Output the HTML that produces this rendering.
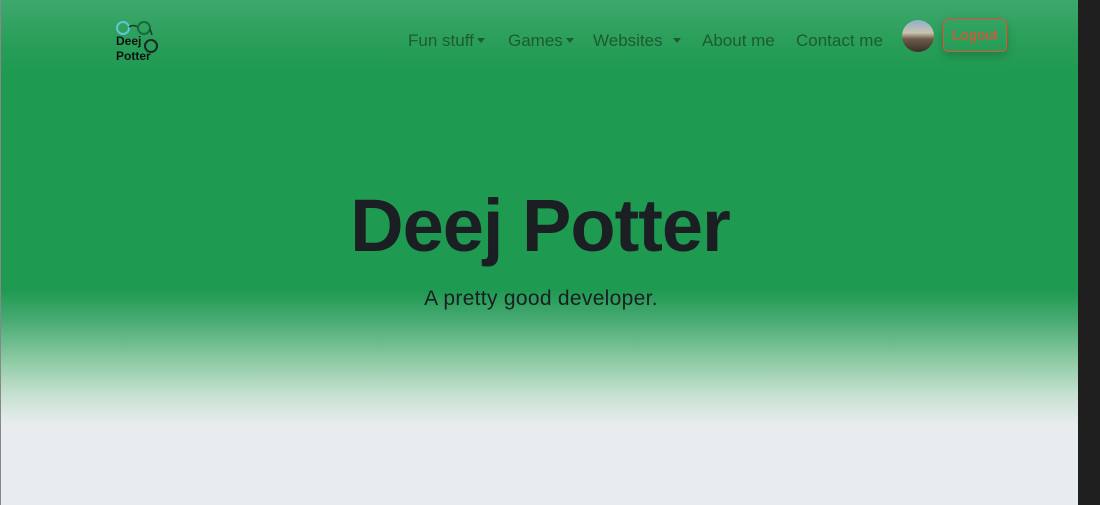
<!DOCTYPE html>
<html><head><style>
body{margin:0;width:1100px;height:505px;overflow:hidden;background:#1f1f1f;font-family:"Liberation Sans",sans-serif}
.page{position:absolute;left:0;top:0;width:1078px;height:505px;border-left:1px solid #888;box-sizing:border-box;
background:linear-gradient(to bottom,#3ea86c 0px,#2a9f5a 40px,#1e9a51 75px,#1e9a51 290px,#48aa72 320px,#8ccaa3 360px,#c6e1d0 395px,#e8ecef 425px,#e8ecef 505px)}
.nav{position:absolute;top:31px;font-size:17px;color:#1e5a33}
.nav span{position:absolute;white-space:nowrap}
.car{display:inline-block;border-left:4px solid transparent;border-right:4px solid transparent;border-top:5px solid #1e5a33;vertical-align:3px;margin-left:3px}
h1{position:absolute;top:183px;left:0;width:1078px;text-align:center;margin:0;font-size:74px;font-weight:bold;color:#1b1e22;letter-spacing:-1px}
.sub{position:absolute;top:287px;left:0;width:1080px;text-align:center;font-size:21px;color:#1b1e22;letter-spacing:0.3px}
.btn{position:absolute;left:942px;top:19px;width:64px;height:33px;border:1px solid #e8503a;border-radius:5px;color:#f04a32;font-size:15px;text-align:center;line-height:32px;box-shadow:0 4px 10px rgba(0,0,0,.2);box-sizing:border-box;z-index:2}
.av{position:absolute;left:901px;top:20px;width:32px;height:32px;border-radius:50%;background:linear-gradient(to bottom,#8fb0c8 0,#c9c3b0 40%,#6b5a48 60%,#3a3028 100%)}
</style></head><body><div class="page">
<svg style="position:absolute;left:113px;top:19px" width="46" height="44">
<circle cx="9" cy="9" r="6" fill="none" stroke="#5fc6d8" stroke-width="2"/>
<path d="M15 8 Q19 5 24 8" fill="none" stroke="#1a3a2a" stroke-width="1.5"/>
<circle cx="30" cy="9" r="6" fill="none" stroke="#176a3d" stroke-width="2"/>
<path d="M36 10 L38 16" stroke="#1a3a2a" stroke-width="1.5"/>
<circle cx="37" cy="27" r="6" fill="none" stroke="#1a2a22" stroke-width="2"/>
<text x="2" y="26" font-family="Liberation Sans" font-weight="bold" font-size="12" fill="#111">Deej</text>
<text x="2" y="41" font-family="Liberation Sans" font-weight="bold" font-size="12" fill="#111">Potter</text>
</svg>
<div class="nav">
<span style="left:407px">Fun stuff<i class="car"></i></span>
<span style="left:507px">Games<i class="car"></i></span>
<span style="left:592px">Websites <i class="car" style="margin-left:6px"></i></span>
<span style="left:701px">About me</span>
<span style="left:795px">Contact me</span>
</div>
<div class="av"></div>
<div class="btn">Logout</div>
<h1>Deej Potter</h1>
<div class="sub">A pretty good developer.</div>
</div></body></html>
